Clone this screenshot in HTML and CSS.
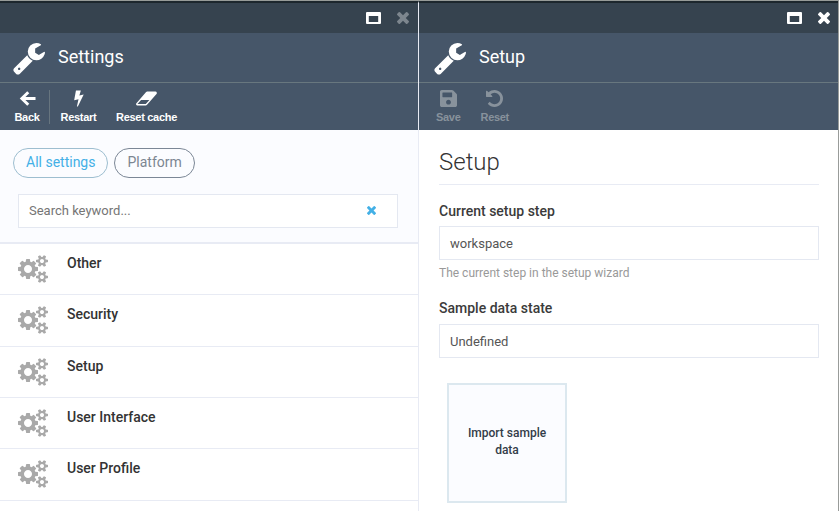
FILE: index.html
```html
<!DOCTYPE html>
<html lang="en">
<head>
<meta charset="utf-8">
<title>Settings</title>
<link rel="stylesheet" href="styles.css">
</head>
<body>
<svg class="defs" width="0" height="0">
  <symbol id="wrench" viewBox="64 128 1664 1664"><path d="M448 1472q0-26-19-45t-45-19-45 19-19 45 19 45 45 19 45-19 19-45zm644-420l-682 682q-37 37-90 37-52 0-91-37l-106-108q-38-36-38-90 0-53 38-91l681-681q39 98 114.500 173.500t173.500 114.500zm634-435q0 39-23 106-47 134-164.500 217.500t-258.500 83.500q-185 0-316.500-131.500t-131.500-316.500 131.500-316.500 316.500-131.500q58 0 121.500 16.500t107.500 46.500q16 11 16 28t-16 28l-293 169v224l193 107q5-3 79-48.500t135.500-81 70.500-35.500q15 0 23.500 10t8.500 25z"/></symbol>
  <symbol id="times" viewBox="302 366 1188 1188"><path d="M1490 1322q0 40-28 68l-136 136q-28 28-68 28t-68-28l-294-294-294 294q-28 28-68 28t-68-28l-136-136q-28-28-28-68t28-68l294-294-294-294q-28-28-28-68t28-68l136-136q28-28 68-28t68 28l294 294 294-294q28-28 68-28t68 28l136 136q28 28 28 68t-28 68l-294 294 294 294q28 28 28 68z"/></symbol>
  <symbol id="cogs" viewBox="-64 0 1920 1792"><path d="M832 896q0-106-75-181t-181-75-181 75-75 181 75 181 181 75 181-75 75-181zm768 512q0-52-38-90t-90-38-90 38-38 90q0 53 37.500 90.500t90.500 37.500 90.500-37.500 37.500-90.500zm0-1024q0-52-38-90t-90-38-90 38-38 90q0 53 37.500 90.500t90.500 37.500 90.500-37.500 37.500-90.500zm-384 421v185q0 10-7 19.500t-16 10.500l-155 24q-11 35-32 76 34 48 90 115 7 11 7 20 0 12-7 19-23 30-82.500 89.500t-78.500 59.500q-11 0-21-7l-115-90q-37 19-77 31-11 108-23 155-7 24-30 24h-186q-11 0-20-7.500t-10-17.500l-23-153q-34-10-75-31l-118 89q-7 7-20 7-11 0-21-8-144-133-144-160 0-9 7-19 10-14 41-53t47-61q-23-44-35-82l-152-24q-10-1-17-9.500t-7-19.500v-185q0-10 7-19.500t16-10.500l155-24q11-35 32-76-34-48-90-115-7-11-7-20 0-12 7-20 22-30 82-89t79-59q11 0 21 7l115 90q34-18 77-32 11-108 23-154 7-24 30-24h186q11 0 20 7.500t10 17.500l23 153q34 10 75 31l118-89q8-7 20-7 11 0 21 8 144 133 144 160 0 8-7 19-12 16-42 54t-45 60q23 48 34 82l152 23q10 2 17 10.500t7 19.500zm640 533v140q0 16-149 31-12 27-30 52 51 113 51 138 0 4-4 7-122 71-124 71-8 0-46-47t-52-68q-20 2-30 2t-30-2q-14 21-52 68t-46 47q-2 0-124-71-4-3-4-7 0-25 51-138-18-25-30-52-149-15-149-31v-140q0-16 149-31 13-29 30-52-51-113-51-138 0-4 4-7 4-2 35-20t59-34 30-16q8 0 46 46.500t52 67.500q20-2 30-2t30 2q51-71 92-112l6-2q4 0 124 70 4 3 4 7 0 25-51 138 17 23 30 52 149 15 149 31zm0-1024v140q0 16-149 31-12 27-30 52 51 113 51 138 0 4-4 7-122 71-124 71-8 0-46-47t-52-68q-20 2-30 2t-30-2q-14 21-52 68t-46 47q-2 0-124-71-4-3-4-7 0-25 51-138-18-25-30-52-149-15-149-31v-140q0-16 149-31 13-29 30-52-51-113-51-138 0-4 4-7 4-2 35-20t59-34 30-16q8 0 46 46.500t52 67.500q20-2 30-2t30 2q51-71 92-112l6-2q4 0 124 70 4 3 4 7 0 25-51 138 17 23 30 52 149 15 149 31z"/></symbol>
  <symbol id="window" viewBox="0 0 15 12"><path fill-rule="evenodd" d="M1 0h13q1 0 1 1v10q0 1-1 1H1q-1 0-1-1V1q0-1 1-1zM2.800 4v6h9.400V4z"/></symbol>
  <symbol id="back" viewBox="0 0 18 18"><path d="M9.800 2.300 3 9l6.800 6.700M3.500 9h14" fill="none" stroke="currentColor" stroke-width="3.100"/></symbol>
  <symbol id="bolt" viewBox="0 0 18 18"><path d="M6.300.5h5.200L9.900 5.800l4.600-1L8.300 17.500h-1l1.700-7.800-4.600 1.200z"/></symbol>
  <symbol id="eraser" viewBox="-70 220 1940 1350"><path fill-rule="evenodd" d="M832 1408l336-384h-768l-336 384h768zm1013-1077q15 34 9.500 71.500t-30.500 65.500l-896 1024q-38 44-96 44h-768q-38 0-69.500-20.500t-47.500-54.500q-15-34-9.500-71.500t30.500-65.500l896-1024q38-44 96-44h768q38 0 69.500 20.500t47.500 54.500z"/></symbol>
  <symbol id="save" viewBox="0 32 448 448"><path d="M433.941 129.941l-83.882-83.882A48 48 0 0 0 316.118 32H48C21.490 32 0 53.490 0 80v352c0 26.510 21.490 48 48 48h352c26.510 0 48-21.490 48-48V163.882a48 48 0 0 0-14.059-33.941zM224 416c-35.346 0-64-28.654-64-64 0-35.346 28.654-64 64-64s64 28.654 64 64c0 35.346-28.654 64-64 64zm96-304.520V212c0 6.627-5.373 12-12 12H76c-6.627 0-12-5.373-12-12V108c0-6.627 5.373-12 12-12h228.520c3.183 0 6.235 1.264 8.485 3.515l3.480 3.480A11.996 11.996 0 0 1 320 111.480z"/></symbol>
  <symbol id="undo" viewBox="128 128 1536 1536"><path d="M1664 896q0 156-61 298t-164 245-245 164-298 61q-172 0-327-72.500t-264-204.500q-7-10-6.500-22.500t8.500-20.500l137-138q10-9 25-9 16 2 23 12 73 95 179 147t225 52q104 0 198.500-40.500t163.500-109.500 109.500-163.500 40.500-198.500-40.500-198.500-109.500-163.500-163.500-109.500-198.500-40.500q-98 0-188 35.500t-160 101.500l137 138q31 30 14 69-17 40-59 40h-448q-26 0-45-19t-19-45v-448q0-42 40-59 39-17 69 14l130 129q107-101 244.500-156.500t284.500-55.500q156 0 298 61t245 164 164 245 61 298z"/></symbol>
</svg>
<div class="app">
  <section class="blade blade-list">
    <div class="topbar">
      <svg class="win"><use href="#window"/></svg>
      <svg class="close dim"><use href="#times"/></svg>
    </div>
    <header class="head"><svg class="wrench"><use href="#wrench"/></svg><h1>Settings</h1></header>
    <nav class="toolbar">
      <button class="tool tool-back"><svg><use href="#back"/></svg>Back</button>
      <button class="tool tool-restart"><svg><use href="#bolt"/></svg>Restart</button>
      <button class="tool tool-cache"><svg class="wide"><use href="#eraser"/></svg>Reset cache</button>
    </nav>
    <div class="filters">
      <div class="pills"><span class="pill active">All settings</span><span class="pill">Platform</span></div>
      <div class="search"><span>Search keyword...</span><svg><use href="#times"/></svg></div>
    </div>
    <ul class="list">
      <li><svg><use href="#cogs"/></svg>Other</li>
      <li><svg><use href="#cogs"/></svg>Security</li>
      <li><svg><use href="#cogs"/></svg>Setup</li>
      <li><svg><use href="#cogs"/></svg>User Interface</li>
      <li><svg><use href="#cogs"/></svg>User Profile</li>
    </ul>
  </section>
  <section class="blade blade-detail">
    <div class="topbar">
      <svg class="win"><use href="#window"/></svg>
      <svg class="close"><use href="#times"/></svg>
    </div>
    <header class="head"><svg class="wrench"><use href="#wrench"/></svg><h1>Setup</h1></header>
    <nav class="toolbar disabled">
      <button class="tool"><svg><use href="#save"/></svg>Save</button>
      <button class="tool"><svg><use href="#undo"/></svg>Reset</button>
    </nav>
    <div class="form">
      <h2>Setup</h2>
      <label>Current setup step</label>
      <div class="field">workspace</div>
      <p class="hint">The current step in the setup wizard</p>
      <label class="state-label">Sample data state</label>
      <div class="field">Undefined</div>
      <button class="tile">Import sample data</button>
    </div>
  </section>
</div>
</body>
</html>
```
FILE: styles.css
```css
* { box-sizing: border-box; }
body { margin: 0; font-family: Roboto, sans-serif; background: #fff; }
svg { fill: currentColor; display: block; flex: none; }
.defs { position: absolute; }
button { font-family: inherit; border: 0; background: none; color: inherit; margin: 0; padding: 0; }
.app { display: flex; height: 511px; overflow: hidden; border-top: 1px solid #979b98; border-right: 1px solid #999c9a; }
.blade { border-top: 2px solid #1d272d; height: 511px; }
.blade-list { width: 419px; border-right: 1px solid #e8ebf4; }
.blade-detail { width: 419px; }
.topbar { height: 30px; background: #36434f; color: #fff; display: flex; justify-content: flex-end; align-items: center; gap: 16.500px; padding-right: 8px; }
.blade-list .topbar { padding-right: 9px; }
.win { width: 15px; height: 12px; }
.close { width: 12px; height: 12px; }
.dim { color: #7d868e; }
.head { height: 50px; background: #465669; border-bottom: 1px solid #68777f; color: #fff; display: flex; padding: 10px 0 0 13px; }
.wrench { width: 32px; height: 32px; }
.blade-detail .wrench { margin-left: 2px; }
h1 { margin: 3px 0 0 13px; font-size: 18px; line-height: 22px; font-weight: 400; }
.toolbar { height: 47px; background: #465669; color: #fff; display: flex; padding: 7px 0 0 5px; }
.tool { height: 34px; font: 700 11px/14px "Liberation Sans", sans-serif; letter-spacing: -.3px; display: flex; flex-direction: column; align-items: center; gap: 3px; }
.tool svg { width: 17px; height: 17px; }
.tool svg.wide { width: 21px; height: 15px; margin: 1px 1px 1px 0; }
.tool-back { width: 45px; border-right: 1px solid #67757f; }
.tool-restart { width: 57px; }
.tool-cache { width: 79px; }
.disabled { color: #88929c; padding-left: 17px; gap: 20px; }
.filters { height: 114px; background: #fbfcff; border-bottom: 2px solid #e8ebf4; padding: 18px 13px 0; }
.pills { display: flex; gap: 6px; }
.pill { height: 30px; padding: 0 12px; border: 1px solid #7b8796; border-radius: 15px; font-size: 14px; line-height: 27px; color: #7c8692; }
.pill.active { color: #43b0e6; border-color: #9dbed0; }
.search { margin: 16px 7px 0 5px; height: 34px; border: 1px solid #e4e8f1; background: #fff; display: flex; align-items: center; justify-content: space-between; padding: 0 21px 2px 10px; font-size: 13px; color: #757575; }
.search svg { width: 9px; height: 9px; color: #43b0e6; }
.list { list-style: none; margin: 0; padding: 0; }
.list li { height: 51.350px; border-bottom: 1px solid #e8ebf4; display: flex; gap: 19px; padding: 10px 0 0 18px; font-size: 14px; line-height: 18px; font-weight: 500; color: #333; }
.list svg { width: 30px; height: 28px; color: #a9a9a9; margin-top: 1px; }
.form { padding: 17px 19px 0 20px; color: #333; }
h2 { margin: 0 0 17px; height: 38px; border-bottom: 1px solid #e8ebf4; font-size: 24px; line-height: 30px; font-weight: 300; }
label { display: block; font-size: 14px; line-height: 18px; font-weight: 500; color: #3b3b3b; margin-bottom: 6px; }
.state-label { margin-bottom: 7px; }
.field { height: 34px; border: 1px solid #e4e8f1; padding: 0 10px; font-size: 13px; line-height: 33px; color: #555; }
.hint { margin: 5px 0 18px; font-size: 12px; line-height: 16px; color: #999; }
.tile { display: block; width: 120px; height: 120px; margin: 25px 0 0 8px; padding: 0 18px 3px; border: 2px solid #dce8ef; background: #fbfcff; font-size: 12px; line-height: 17px; font-weight: 500; color: #333d49; }
```
